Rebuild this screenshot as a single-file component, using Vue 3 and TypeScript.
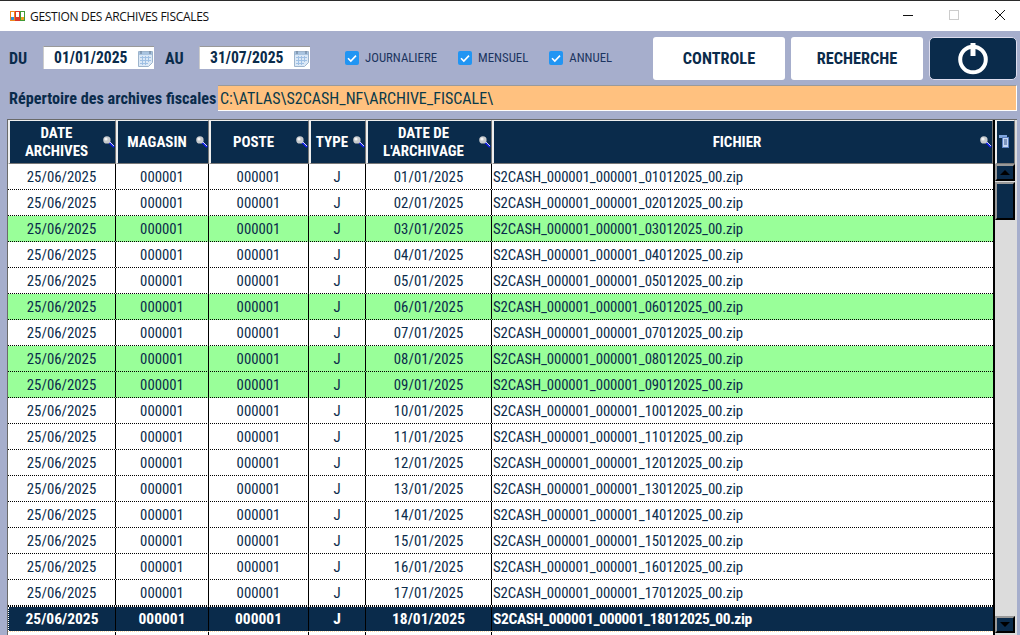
<script setup lang="ts">
interface Row {
  day: number
  green: boolean
  selected: boolean
  empty: boolean
}

const greenDays = [3, 6, 8, 9]

const columns = [
  { key: 'archive', title: ['DATE', 'ARCHIVES'] },
  { key: 'shop', title: ['MAGASIN'] },
  { key: 'post', title: ['POSTE'] },
  { key: 'type', title: ['TYPE'] },
  { key: 'date', title: ['DATE DE', "L'ARCHIVAGE"] },
  { key: 'file', title: ['FICHIER'] }
]

// the 19th row only peeks out by a few pixels under the window edge
const rows: Row[] = Array.from({ length: 19 }, (_, i) => ({
  day: i + 1,
  green: greenDays.includes(i + 1),
  selected: i === 17,
  empty: i === 18
}))

const pad = (n: number) => String(n).padStart(2, '0')
const rowDate = (d: number) => `${pad(d)}/01/2025`
const rowFile = (d: number) => `S2CASH_000001_000001_${pad(d)}012025_00.zip`

const filters = ['JOURNALIERE', 'MENSUEL', 'ANNUEL']
</script>

<template>
  <div class="window">
    <header class="titlebar">
      <svg class="app-icon" width="15" height="10" viewBox="0 0 15 10">
        <rect x="0.5" y="0.5" width="4" height="9" fill="#fff" stroke="#f08a1c" />
        <rect x="5.5" y="0.5" width="4" height="9" fill="#fff" stroke="#d8382c" />
        <rect x="10.5" y="0.5" width="4" height="9" fill="#fff" stroke="#3f9a35" />
        <rect x="1" y="6" width="3" height="3" fill="#2f8fd8" />
        <rect x="6" y="6" width="3" height="3" fill="#d8382c" />
        <rect x="11" y="6" width="3" height="3" fill="#e8a01e" />
      </svg>
      <span class="title">GESTION DES ARCHIVES FISCALES</span>
      <div class="win-buttons">
        <span class="win-btn"><i class="win-min"></i></span>
        <span class="win-btn"><i class="win-max"></i></span>
        <span class="win-btn">
          <svg width="12" height="12" viewBox="0 0 12 12">
            <path d="M1 1 11 11M11 1 1 11" stroke="#111" stroke-width="1" fill="none" />
          </svg>
        </span>
      </div>
    </header>

    <main class="content">
      <section class="toolbar">
        <label class="date-label first">DU</label>
        <div class="date-box">
          <span>01/01/2025</span>
          <svg class="cal" width="15" height="17" viewBox="0 0 15 17">
            <path d="M0.5 1.5h14v11l-4 4h-10z" fill="#dbe8f6" stroke="#9db4cc" />
            <rect x="1" y="2" width="13" height="3" fill="#a9c4e0" />
            <path d="M3 1v3M12 1v3" stroke="#60758c" />
            <path d="M2 7.5h11M2 10.5h11M2 13.5h8M4.5 6v9M7.5 6v9M10.5 6v6" stroke="#9fc0e4" />
          </svg>
        </div>
        <label class="date-label second">AU</label>
        <div class="date-box">
          <span>31/07/2025</span>
          <svg class="cal" width="15" height="17" viewBox="0 0 15 17">
            <path d="M0.5 1.5h14v11l-4 4h-10z" fill="#dbe8f6" stroke="#9db4cc" />
            <rect x="1" y="2" width="13" height="3" fill="#a9c4e0" />
            <path d="M3 1v3M12 1v3" stroke="#60758c" />
            <path d="M2 7.5h11M2 10.5h11M2 13.5h8M4.5 6v9M7.5 6v9M10.5 6v6" stroke="#9fc0e4" />
          </svg>
        </div>

        <div class="filters">
          <div v-for="f in filters" :key="f" class="filter">
            <span class="check">
              <svg width="14" height="14" viewBox="0 0 14 14">
                <path d="M3 7.2 5.8 10 11 4.6" fill="none" stroke="#fff" stroke-width="1.6" />
              </svg>
            </span>
            <span>{{ f }}</span>
          </div>
        </div>

        <div class="actions">
          <button type="button" class="action">CONTROLE</button>
          <button type="button" class="action">RECHERCHE</button>
          <button type="button" class="action power" aria-label="Quitter">
            <svg width="30" height="32" viewBox="0 0 30 32">
              <circle cx="15" cy="16.5" r="12.8" fill="none" stroke="#fff" stroke-width="4" />
              <path d="M15 0v13" stroke="#fff" stroke-width="5" />
            </svg>
          </button>
        </div>
      </section>

      <section class="path-row">
        <span class="path-label">Répertoire des archives fiscales</span>
        <div class="path-value">C:\ATLAS\S2CASH_NF\ARCHIVE_FISCALE\</div>
      </section>

      <section class="grid-frame">
        <div class="grid-main">
          <div class="head-row">
            <div v-for="col in columns" :key="col.key" class="head-cell">
              <span class="head-text">
                <span v-for="line in col.title" :key="line">{{ line }}</span>
              </span>
              <svg class="lens" width="12" height="12" viewBox="0 0 12 12">
                <path d="M6 6 11 11" stroke="#1420e8" stroke-width="2.2" />
                <path d="M7 6 11 10" stroke="#fff" stroke-width="0.8" />
                <circle cx="3.9" cy="3.9" r="3.7" fill="#c6c9cc" />
                <circle cx="3" cy="3" r="1.6" fill="#f4f4f4" />
              </svg>
            </div>
          </div>
          <div class="body">
            <div
              v-for="row in rows"
              :key="row.day"
              class="row"
              :class="{ green: row.green, selected: row.selected }"
            >
              <template v-if="!row.empty">
                <div class="cell">25/06/2025</div>
                <div class="cell">000001</div>
                <div class="cell">000001</div>
                <div class="cell">J</div>
                <div class="cell">{{ rowDate(row.day) }}</div>
                <div class="cell file">{{ rowFile(row.day) }}</div>
              </template>
              <template v-else>
                <div v-for="n in 6" :key="n" class="cell" :class="{ file: n === 6 }"></div>
              </template>
            </div>
          </div>
        </div>

        <aside class="side">
          <div class="menu-head">
            <svg width="10" height="13" viewBox="0 0 10 13">
              <rect x="0" y="0" width="8" height="3" fill="#7da3dc" />
              <rect x="3.5" y="2.5" width="6" height="10" fill="#c4d6f2" stroke="#5a7fc0" />
              <path d="M5 5h3M5 7h3M5 9h3" stroke="#34558c" />
            </svg>
          </div>
          <div class="scrollbar">
            <span class="sb-btn"><i class="tri up"></i></span>
            <span class="sb-thumb"></span>
            <span class="sb-track"></span>
            <span class="sb-btn"><i class="tri down"></i></span>
          </div>
        </aside>
      </section>
    </main>
  </div>
</template>

<style>
html,
body {
  margin: 0;
  background: #a6aecc;
}
</style>

<style scoped>
.window {
  width: 1020px;
  height: 635px;
  display: flex;
  flex-direction: column;
  overflow: hidden;
  box-sizing: border-box;
  border-top: 1px solid #2b2b2b;
  font-family: 'Roboto Condensed', Roboto, 'Liberation Sans', sans-serif;
  font-stretch: 75%;
  color: #0a2b4b;
}

.titlebar {
  height: 30px;
  flex: none;
  display: flex;
  align-items: center;
  background: #fff;
  padding-left: 10px;
}

.app-icon {
  margin-right: 5px;
}

.title {
  font: 12px 'Open Sans', 'Liberation Sans', sans-serif;
  color: #111;
  letter-spacing: -0.3px;
}

.win-buttons {
  margin-left: auto;
  margin-right: -3px;
  align-self: flex-start;
  display: flex;
}

.win-btn {
  width: 46px;
  height: 28px;
  display: flex;
  align-items: center;
  justify-content: center;
}

.win-min {
  width: 10px;
  height: 1px;
  background: #111;
}

.win-max {
  width: 8px;
  height: 8px;
  border: 1px solid #ccc;
}

.content {
  flex: 1;
  min-height: 0;
  display: flex;
  flex-direction: column;
  background: #a6aecc;
}

.toolbar {
  height: 49px;
  flex: none;
  box-sizing: border-box;
  padding: 6px 3px 0 9px;
  display: flex;
  align-items: flex-start;
}

.date-label {
  font-size: 16px;
  font-weight: 700;
  line-height: 43px;
}

.date-label.first {
  width: 34px;
}

.date-label.second {
  width: 34px;
  margin-left: 11px;
}

.date-box {
  width: 111px;
  height: 23px;
  margin-top: 9px;
  box-sizing: border-box;
  background: #fff;
  border-top: 1px solid #999;
  border-left: 1px solid #ccc;
  display: flex;
  align-items: center;
  padding-left: 10px;
  font-size: 15.6px;
  font-weight: 700;
}

.cal {
  margin-left: auto;
  margin-right: 1px;
}

.filters {
  display: flex;
  margin-left: 35px;
  margin-top: 13px;
}

.filter {
  display: flex;
  align-items: center;
  gap: 6px;
  font-size: 12.8px;
  color: #1c3560;
  margin-right: 21px;
}

.check {
  width: 14px;
  height: 14px;
  border-radius: 2px;
  background: #2195f3;
  display: block;
}

.check svg {
  display: block;
}

.actions {
  margin-left: auto;
  display: flex;
  gap: 6px;
}

.action {
  width: 132px;
  height: 43px;
  padding: 0;
  border: 0;
  border-radius: 3px;
  background: #fff;
  color: #0a2b4b;
  font: 700 16.3px 'Roboto Condensed', Roboto, sans-serif;
  font-stretch: 75%;
}

.action.power {
  width: 88px;
  background: #0a2b4b;
  border: 1px solid #dde;
  border-radius: 5px;
  box-sizing: border-box;
  display: flex;
  align-items: center;
  justify-content: center;
}

.path-row {
  height: 39px;
  flex: none;
  box-sizing: border-box;
  padding: 5px 3px 0 9px;
  display: flex;
  align-items: flex-start;
  gap: 2px;
}

.path-label {
  width: 207px;
  flex: none;
  font-size: 16.2px;
  font-weight: 700;
  line-height: 27px;
  white-space: nowrap;
}

.path-value {
  flex: 1;
  height: 26px;
  box-sizing: border-box;
  background: #ffc17f;
  border-top: 1px solid #9a9a9a;
  border-bottom: 1px solid #fff;
  border-right: 1px solid #fff;
  padding-left: 2px;
  font-size: 16px;
  line-height: 25px;
  color: #0a3a4a;
}

.grid-frame {
  flex: 1;
  min-height: 0;
  margin-left: 7px;
  box-sizing: border-box;
  width: 1010px;
  background: #dcdcdc;
  border-top: 1px solid #6a6a6a;
  border-left: 1px solid #6a6a6a;
  display: flex;
  overflow: hidden;
}

.grid-main {
  width: 985px;
  flex: none;
  background: #fff;
}

.head-row,
.row {
  display: grid;
  grid-template-columns: 108px 93px 100px 57px 126px 1fr;
}

.head-row {
  height: 44px;
}

.head-cell {
  position: relative;
  box-sizing: border-box;
  background: #0a2b4b;
  border: 1px solid #777;
  border-top-color: #eee;
  border-left: 2px solid #eee;
  padding-right: 12px;
  color: #fff;
  font-size: 15px;
  font-weight: 700;
  display: flex;
  align-items: center;
  justify-content: center;
  text-align: center;
  line-height: 18px;
}

.head-text {
  display: flex;
  flex-direction: column;
}

.lens {
  position: absolute;
  right: 0;
  top: 15px;
}

.row {
  height: 26px;
  box-sizing: border-box;
  background: #fff;
  border-bottom: 1px dotted #000;
}

.row.green {
  background: #99ff99;
}

.row.selected {
  background: #0a2b4b;
  background-clip: padding-box;
  color: #fff;
  font-weight: 700;
  border-top: 1px dotted #000;
  border-bottom-color: #ffd9a8;
}

.cell {
  box-sizing: border-box;
  border-right: 1px solid #000;
  padding-top: 1px;
  text-align: center;
  font-size: 14.8px;
  line-height: 24px;
  white-space: nowrap;
}

.row.selected .cell {
  padding-top: 0;
  font-size: 15.5px;
}

.row.selected .cell:first-child {
  border-left: 1px dotted #fff;
}

.cell.file {
  text-align: left;
  padding-left: 1px;
  border-right: 0;
  letter-spacing: -0.13px;
}

.row.selected .cell.file {
  letter-spacing: -0.38px;
}

.side {
  width: 24px;
  flex: none;
  box-sizing: border-box;
  border-left: 2px solid #000;
  padding-right: 2px;
  display: flex;
  flex-direction: column;
}

.menu-head {
  height: 44px;
  flex: none;
  box-sizing: border-box;
  background: #0a2b4b;
  border: 1px solid #777;
  border-left: 2px solid #eee;
  border-top-color: #eee;
  display: flex;
  justify-content: center;
  padding-top: 14px;
}

.menu-head svg {
  margin-right: 3px;
}

.scrollbar {
  flex: 1;
  display: flex;
  flex-direction: column;
  padding-bottom: 2px;
  background: #dcdcdc;
}

.sb-btn,
.sb-thumb {
  box-sizing: border-box;
  background: #0a2b4b;
  border: 2px solid;
  border-color: #999 #000 #000 #999;
  flex: none;
}

.sb-btn {
  height: 17px;
  display: flex;
  align-items: center;
  justify-content: center;
}

.sb-thumb {
  height: 38px;
  margin-top: 1px;
}

.sb-track {
  flex: 1;
}

.tri {
  width: 0;
  height: 0;
  border-left: 5px solid transparent;
  border-right: 5px solid transparent;
}

.tri.up {
  border-bottom: 5px solid #000;
}

.tri.down {
  border-top: 5px solid #000;
}
</style>
